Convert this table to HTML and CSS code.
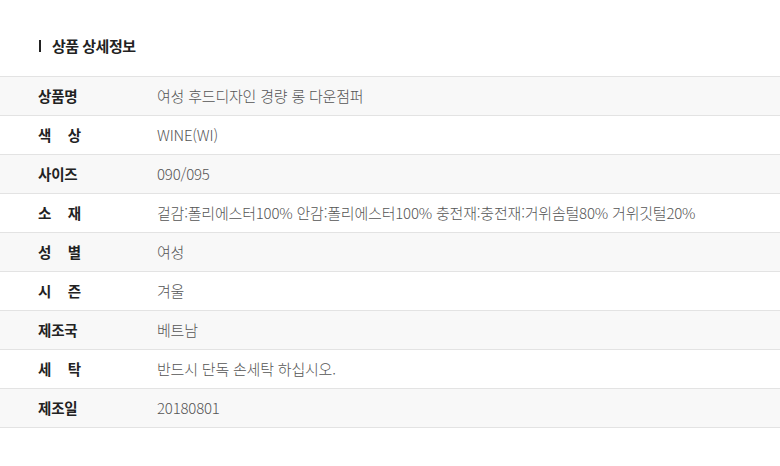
FILE: index.html
```html
<!DOCTYPE html>
<html lang="ko">
<head>
<meta charset="utf-8">
<link rel="stylesheet" href="styles.css">
</head>
<body>
<div class="page">
  <h2 class="title"><span class="bar"></span>상품 상세정보</h2>
  <div class="table">
    <div class="row alt"><div class="label">상품명</div><div class="value">여성 후드디자인 경량 롱 다운점퍼</div></div>
    <div class="row"><div class="label spread"><span>색</span><span>상</span></div><div class="value">WINE(WI)</div></div>
    <div class="row alt"><div class="label">사이즈</div><div class="value">090/095</div></div>
    <div class="row"><div class="label spread"><span>소</span><span>재</span></div><div class="value">겉감:폴리에스터100% 안감:폴리에스터100% 충전재:충전재:거위솜털80% 거위깃털20%</div></div>
    <div class="row alt"><div class="label spread"><span>성</span><span>별</span></div><div class="value">여성</div></div>
    <div class="row"><div class="label spread"><span>시</span><span>즌</span></div><div class="value">겨울</div></div>
    <div class="row alt"><div class="label">제조국</div><div class="value">베트남</div></div>
    <div class="row"><div class="label spread"><span>세</span><span>탁</span></div><div class="value">반드시 단독 손세탁 하십시오.</div></div>
    <div class="row alt"><div class="label">제조일</div><div class="value">20180801</div></div>
  </div>
</div>
</body>
</html>
```
FILE: styles.css
```css
html, body {
  margin: 0;
  padding: 0;
  background: #fff;
}
.page {
  font-family: "Noto Sans CJK KR", "Noto Sans", sans-serif;
  padding-top: 36px;
}
.title {
  margin: 0 0 0 38px;
  height: 20px;
  display: flex;
  align-items: center;
  font-size: 15px;
  font-weight: 700;
  color: #222;
  line-height: 20px;
  letter-spacing: -0.5px;
}
.bar {
  display: inline-block;
  width: 2px;
  height: 12px;
  background: #222;
  margin: 0 11px 0 1px;
}
.table {
  margin-top: 20px;
  border-top: 1px solid #e3e3e3;
}
.row {
  display: flex;
  align-items: center;
  height: 37px;
  padding-bottom: 1px;
  border-bottom: 1px solid #e3e3e3;
  background: #fff;
}
.row.alt {
  background: #f8f8f8;
}
.label {
  width: 43px;
  margin-left: 38px;
  margin-right: 76px;
  font-size: 14.5px;
  font-weight: 700;
  color: #222;
  white-space: nowrap;
  letter-spacing: -0.2px;
}
.label.spread {
  display: flex;
  justify-content: space-between;
}
.value {
  font-size: 15px;
  font-weight: 300;
  color: #555;
  letter-spacing: -0.2px;
  white-space: nowrap;
}
```
